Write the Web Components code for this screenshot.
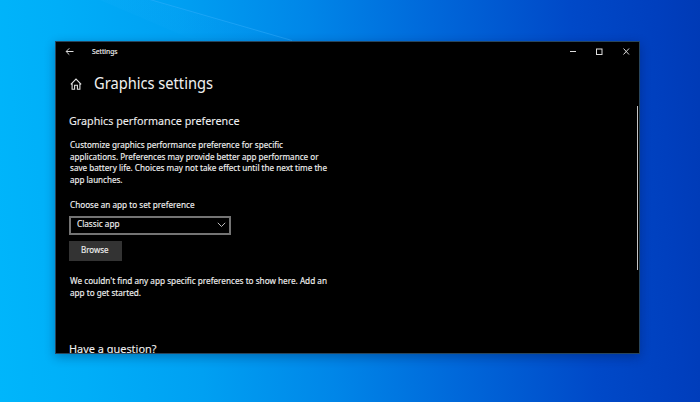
<!DOCTYPE html>
<html lang="en"><head><meta charset="utf-8"><title>Settings</title>
<style>html,body{margin:0;height:100%;overflow:hidden}</style></head>
<body>
<desktop-wallpaper>
<settings-window>
<title-bar slot="bar"></title-bar>
<page-header slot="head"></page-header>
<graphics-page></graphics-page>
</settings-window>
</desktop-wallpaper>
<script>
const define=(name,html,after)=>customElements.define(name,class extends HTMLElement{
  connectedCallback(){
    if(this.shadowRoot)return;
    const t=document.createElement('template');t.innerHTML=html;
    this.attachShadow({mode:'open'}).append(t.content.cloneNode(true));
    if(after)after(this);
  }
});

define('desktop-wallpaper',`<style>
:host{display:grid;place-items:start;box-sizing:border-box;width:700px;height:402px;padding:41px 0 0 55px;position:relative;overflow:hidden;
font-family:"Noto Sans","Open Sans",sans-serif;color:#f0f0f0;
background:linear-gradient(86deg,#00b6fb 0%,#00aef8 12%,#00a0f2 28%,#0086e8 46%,#0068da 63%,#0049c8 82%,#003fbe 94%,#003ab6 100%)}
svg{position:absolute;inset:0}
</style><svg width="700" height="402"><defs><linearGradient id="g" x1="0" x2="1" y1="0" y2="1"><stop stop-color="#39b9ff" stop-opacity=".3"/><stop offset="1" stop-color="#39b9ff" stop-opacity="0"/></linearGradient></defs>
<path d="M150 0L295 41L240 60L100 0Z" fill="url(#g)" opacity=".25"/><path d="M148 -1L292 40.500" stroke="#41b4ff" stroke-opacity=".4"/></svg><slot></slot>`);

define('settings-window',`<style>
:host{display:grid;grid-template-rows:20px 44px 1fr;box-sizing:border-box;width:585px;height:313px;background:#000;border:1px solid #28455c;position:relative;overflow:hidden;box-shadow:0 3px 10px rgba(0,15,60,.32)}
i{position:absolute;right:1px;top:64px;width:1px;height:164px;background:#c4c4c4}
</style><slot name="bar"></slot><slot name="head"></slot><slot></slot><i></i>`);

// One line of text, condensed or widened to the width given by "w".
define('text-line',`<style>
:host{display:block;white-space:nowrap}
span{display:inline-block;transform-origin:0 50%}
</style><span><slot></slot></span>`,el=>{
  const s=el.shadowRoot.querySelector('span');
  s.style.transform='scaleX('+(+el.getAttribute('w')/s.getBoundingClientRect().width)+')';
});

define('title-bar',`<style>
:host{display:flex;align-items:center;height:20px;padding:0 8px 0 9px;font-size:7px;line-height:20px;-webkit-text-stroke:.15px}
svg{display:block;fill:none;stroke:#ddd;position:relative;top:-.5px}
.c{margin-left:auto;display:flex;gap:18px;align-items:center}
text-line{margin-left:17.500px;width:26px}
</style><svg width="9" height="9"><path d="M8.500 4.500H1.200M4.300 1.300L1.100 4.500L4.300 7.700"/></svg><text-line w="25.500">Settings</text-line>
<div class="c"><svg width="8" height="9"><path d="M1 4.500H7"/></svg><svg width="9" height="9"><rect x="1.500" y="2" width="5.500" height="5.500"/></svg><svg width="9" height="9"><path d="M1.500 1.500L7 7.500M7 1.500L1.500 7.500"/></svg></div>`);

define('page-header',`<style>
:host{display:flex;align-items:center;height:44px;padding-left:14px}
svg{display:block;fill:none;stroke:#e2e2e2;stroke-width:1.100}
text-line{font-size:16.500px;line-height:42px;height:44px;margin-left:11.500px}
</style><svg width="12" height="12"><path d="M.8 6.300L6 1L11.200 6.300M2.100 5V11.200H4.600V7.200H7.400V11.200H9.900V5"/></svg><text-line w="119">Graphics settings</text-line>`);

define('select-box',`<style>
:host{display:flex;align-items:center;justify-content:space-between;box-sizing:border-box;width:162px;height:19px;border:2px solid #747474;padding:0 3px 0 6px}
svg{display:block;fill:none;stroke:#bdbdbd}
</style><slot></slot><svg width="9" height="6"><path d="M.8 .8L4.500 4.500L8.200 .8"/></svg>`);

define('push-button',`<style>
:host{display:flex;align-items:center;box-sizing:border-box;width:53px;height:20px;background:#333;padding-left:12px}
</style><slot></slot>`);

define('graphics-page',`<style>
:host{display:flex;flex-direction:column;padding:6px 0 0 13px;font-size:8.800px;line-height:11.650px;-webkit-text-stroke:.15px}
h2{margin:0;font-weight:400;font-size:11.500px;line-height:18px;-webkit-text-stroke:.1px}
p{margin:0;padding-left:.5px}
.d{margin-top:10px}.l{margin-top:13.400px}
select-box{margin:4px 0 0 0}push-button{margin:6px 0 0 0}
.n{margin-top:15.500px}.q{margin-top:40.500px}
</style>
<h2><text-line w="170.500">Graphics performance preference</text-line></h2>
<p class="d"><text-line w="213">Customize graphics performance preference for specific</text-line><text-line w="248.500">applications. Preferences may provide better app performance or</text-line><text-line w="257">save battery life. Choices may not take effect until the next time the</text-line><text-line w="52.500">app launches.</text-line></p>
<p class="l"><text-line w="124.500">Choose an app to set preference</text-line></p>
<select-box><text-line w="42.500">Classic app</text-line></select-box>
<push-button><text-line w="27.500">Browse</text-line></push-button>
<p class="n"><text-line w="257">We couldn't find any app specific preferences to show here. Add an</text-line><text-line w="71">app to get started.</text-line></p>
<h2 class="q"><text-line w="87.500">Have a question?</text-line></h2>`);
</script>
</body></html>
